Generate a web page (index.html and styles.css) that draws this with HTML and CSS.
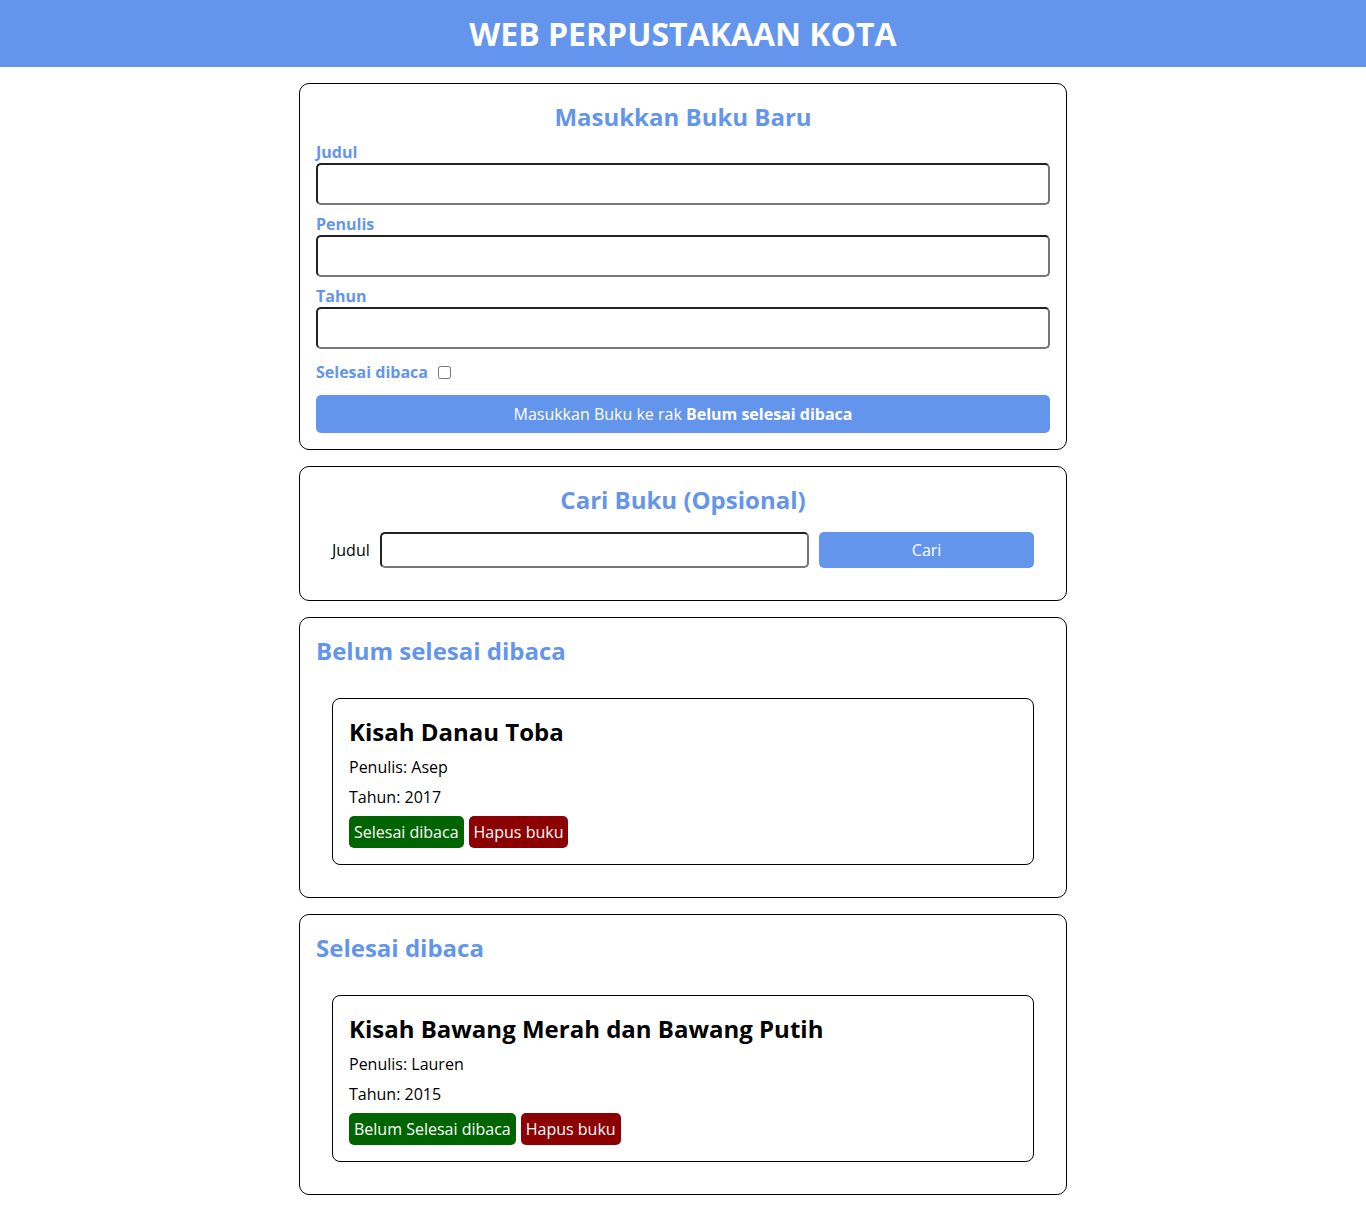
FILE: index.html
```html
<!DOCTYPE html>
<html lang="id">
<head>
<meta charset="utf-8">
<title>Bookshelf Apps</title>
<link rel="stylesheet" href="styles.css">
</head>
<body>
<header class="head_bar">
  <h1 class="head_bar__title">WEB PERPUSTAKAAN KOTA</h1>
</header>
<main>
  <section class="input_section">
    <h2>Masukkan Buku Baru</h2>
    <form id="inputBook">
      <div class="input">
        <label for="inputBookTitle">Judul</label>
        <input id="inputBookTitle" type="text">
      </div>
      <div class="input">
        <label for="inputBookAuthor">Penulis</label>
        <input id="inputBookAuthor" type="text">
      </div>
      <div class="input">
        <label for="inputBookYear">Tahun</label>
        <input id="inputBookYear" type="number">
      </div>
      <div class="input_inline">
        <label for="inputBookIsComplete">Selesai dibaca</label>
        <input id="inputBookIsComplete" type="checkbox">
      </div>
      <button id="bookSubmit" type="button">Masukkan Buku ke rak <span>Belum selesai dibaca</span></button>
    </form>
  </section>

  <section class="search_section">
    <h2>Cari Buku (Opsional)</h2>
    <form id="searchBook">
      <label for="searchBookTitle">Judul</label>
      <input id="searchBookTitle" type="text">
      <button id="searchSubmit" type="button">Cari</button>
    </form>
  </section>

  <section class="book_shelf">
    <h2>Belum selesai dibaca</h2>
    <div class="book_list">
      <article class="book_item">
        <h3>Kisah Danau Toba</h3>
        <p>Penulis: Asep</p>
        <p>Tahun: 2017</p>
        <div class="action">
          <button class="green">Selesai dibaca</button><button class="red">Hapus buku</button>
        </div>
      </article>
    </div>
  </section>

  <section class="book_shelf">
    <h2>Selesai dibaca</h2>
    <div class="book_list">
      <article class="book_item">
        <h3>Kisah Bawang Merah dan Bawang Putih</h3>
        <p>Penulis: Lauren</p>
        <p>Tahun: 2015</p>
        <div class="action">
          <button class="green">Belum Selesai dibaca</button><button class="red">Hapus buku</button>
        </div>
      </article>
    </div>
  </section>
</main>
</body>
</html>
```

FILE: styles.css
```css
* {
  padding: 0;
  margin: 0;
  box-sizing: border-box;
  font-family: "Open Sans", sans-serif;
}

body {
  background: #fff;
  color: #000;
  font-size: 16px;
}

input, button {
  font-size: 16px;
  font-family: "Open Sans", sans-serif;
}

.head_bar {
  padding: 12px;
  display: flex;
  align-items: center;
  justify-content: center;
  background-color: cornflowerblue;
  color: white;
}

.head_bar__title {
  font-size: 32px;
  font-weight: bold;
}

main {
  max-width: 800px;
  width: 80%;
  margin: 0 auto;
  padding: 16px;
}

h2 {
  font-size: 24px;
  font-weight: bold;
}

.input_section {
  display: flex;
  flex-direction: column;
  padding: 16px;
  border: 1px solid black;
  border-radius: 10px;
}

.input_section h2 {
  text-align: center;
  color: cornflowerblue;
}

.input_section .input {
  margin: 8px 0;
}

.input_section form > button {
  background-color: cornflowerblue;
  color: white;
  border: 0;
  border-radius: 5px;
  display: block;
  width: 100%;
  padding: 8px;
  cursor: pointer;
}

.input_section form > button span {
  font-weight: bold;
}

.input_section .input input {
  display: block;
  width: 100%;
  padding: 8px;
  border-radius: 5px;
  border: 2px solid #767676;
  border-top-color: #222;
  border-left-color: #222;
}

.input_section .input label {
  color: cornflowerblue;
  font-weight: bold;
}

.input_section .input_inline {
  margin: 12px 0;
  display: flex;
  align-items: center;
}

.input_section .input_inline label {
  color: cornflowerblue;
  font-weight: bold;
  margin-right: 10px;
}

.input_section .input_inline input {
  width: 13px;
  height: 13px;
}

.search_section {
  margin: 16px 0;
  display: flex;
  flex-direction: column;
  align-items: center;
  padding: 16px;
  border: 1px solid black;
  border-radius: 10px;
}

.search_section h2 {
  color: cornflowerblue;
}

.search_section form {
  padding: 16px;
  width: 100%;
  display: grid;
  grid-template-columns: auto 1fr 0.5fr;
  gap: 10px;
}

.search_section label {
  display: flex;
  align-items: center;
}

.search_section input {
  padding: 5px;
  border-radius: 5px;
  border: 2px solid #767676;
  border-top-color: #222;
  border-left-color: #222;
}

.search_section button {
  background-color: cornflowerblue;
  color: white;
  border: 0;
  border-radius: 5px;
  cursor: pointer;
}

.book_shelf {
  margin: 16px 0 0 0;
  border: 1px solid black;
  padding: 16px;
  border-radius: 10px;
}

.book_shelf h2 {
  color: cornflowerblue;
}

.book_list {
  padding: 16px;
}

.book_item {
  padding: 8px 16px 16px 16px;
  border: 1px solid black;
  border-radius: 8px;
  margin: 15px 0 0 0;
}

.book_item h3 {
  font-size: 24px;
  font-weight: bold;
  margin: 8px 0;
}

.book_item p {
  margin: 8px 0;
}

.action {
  display: flex;
}

.action button {
  border: 0;
  padding: 5px;
  margin: 0 5px 0 0;
  border-radius: 5px;
  cursor: pointer;
  color: white;
}

.action .green {
  background-color: darkgreen;
}

.action .red {
  background-color: darkred;
}
```
